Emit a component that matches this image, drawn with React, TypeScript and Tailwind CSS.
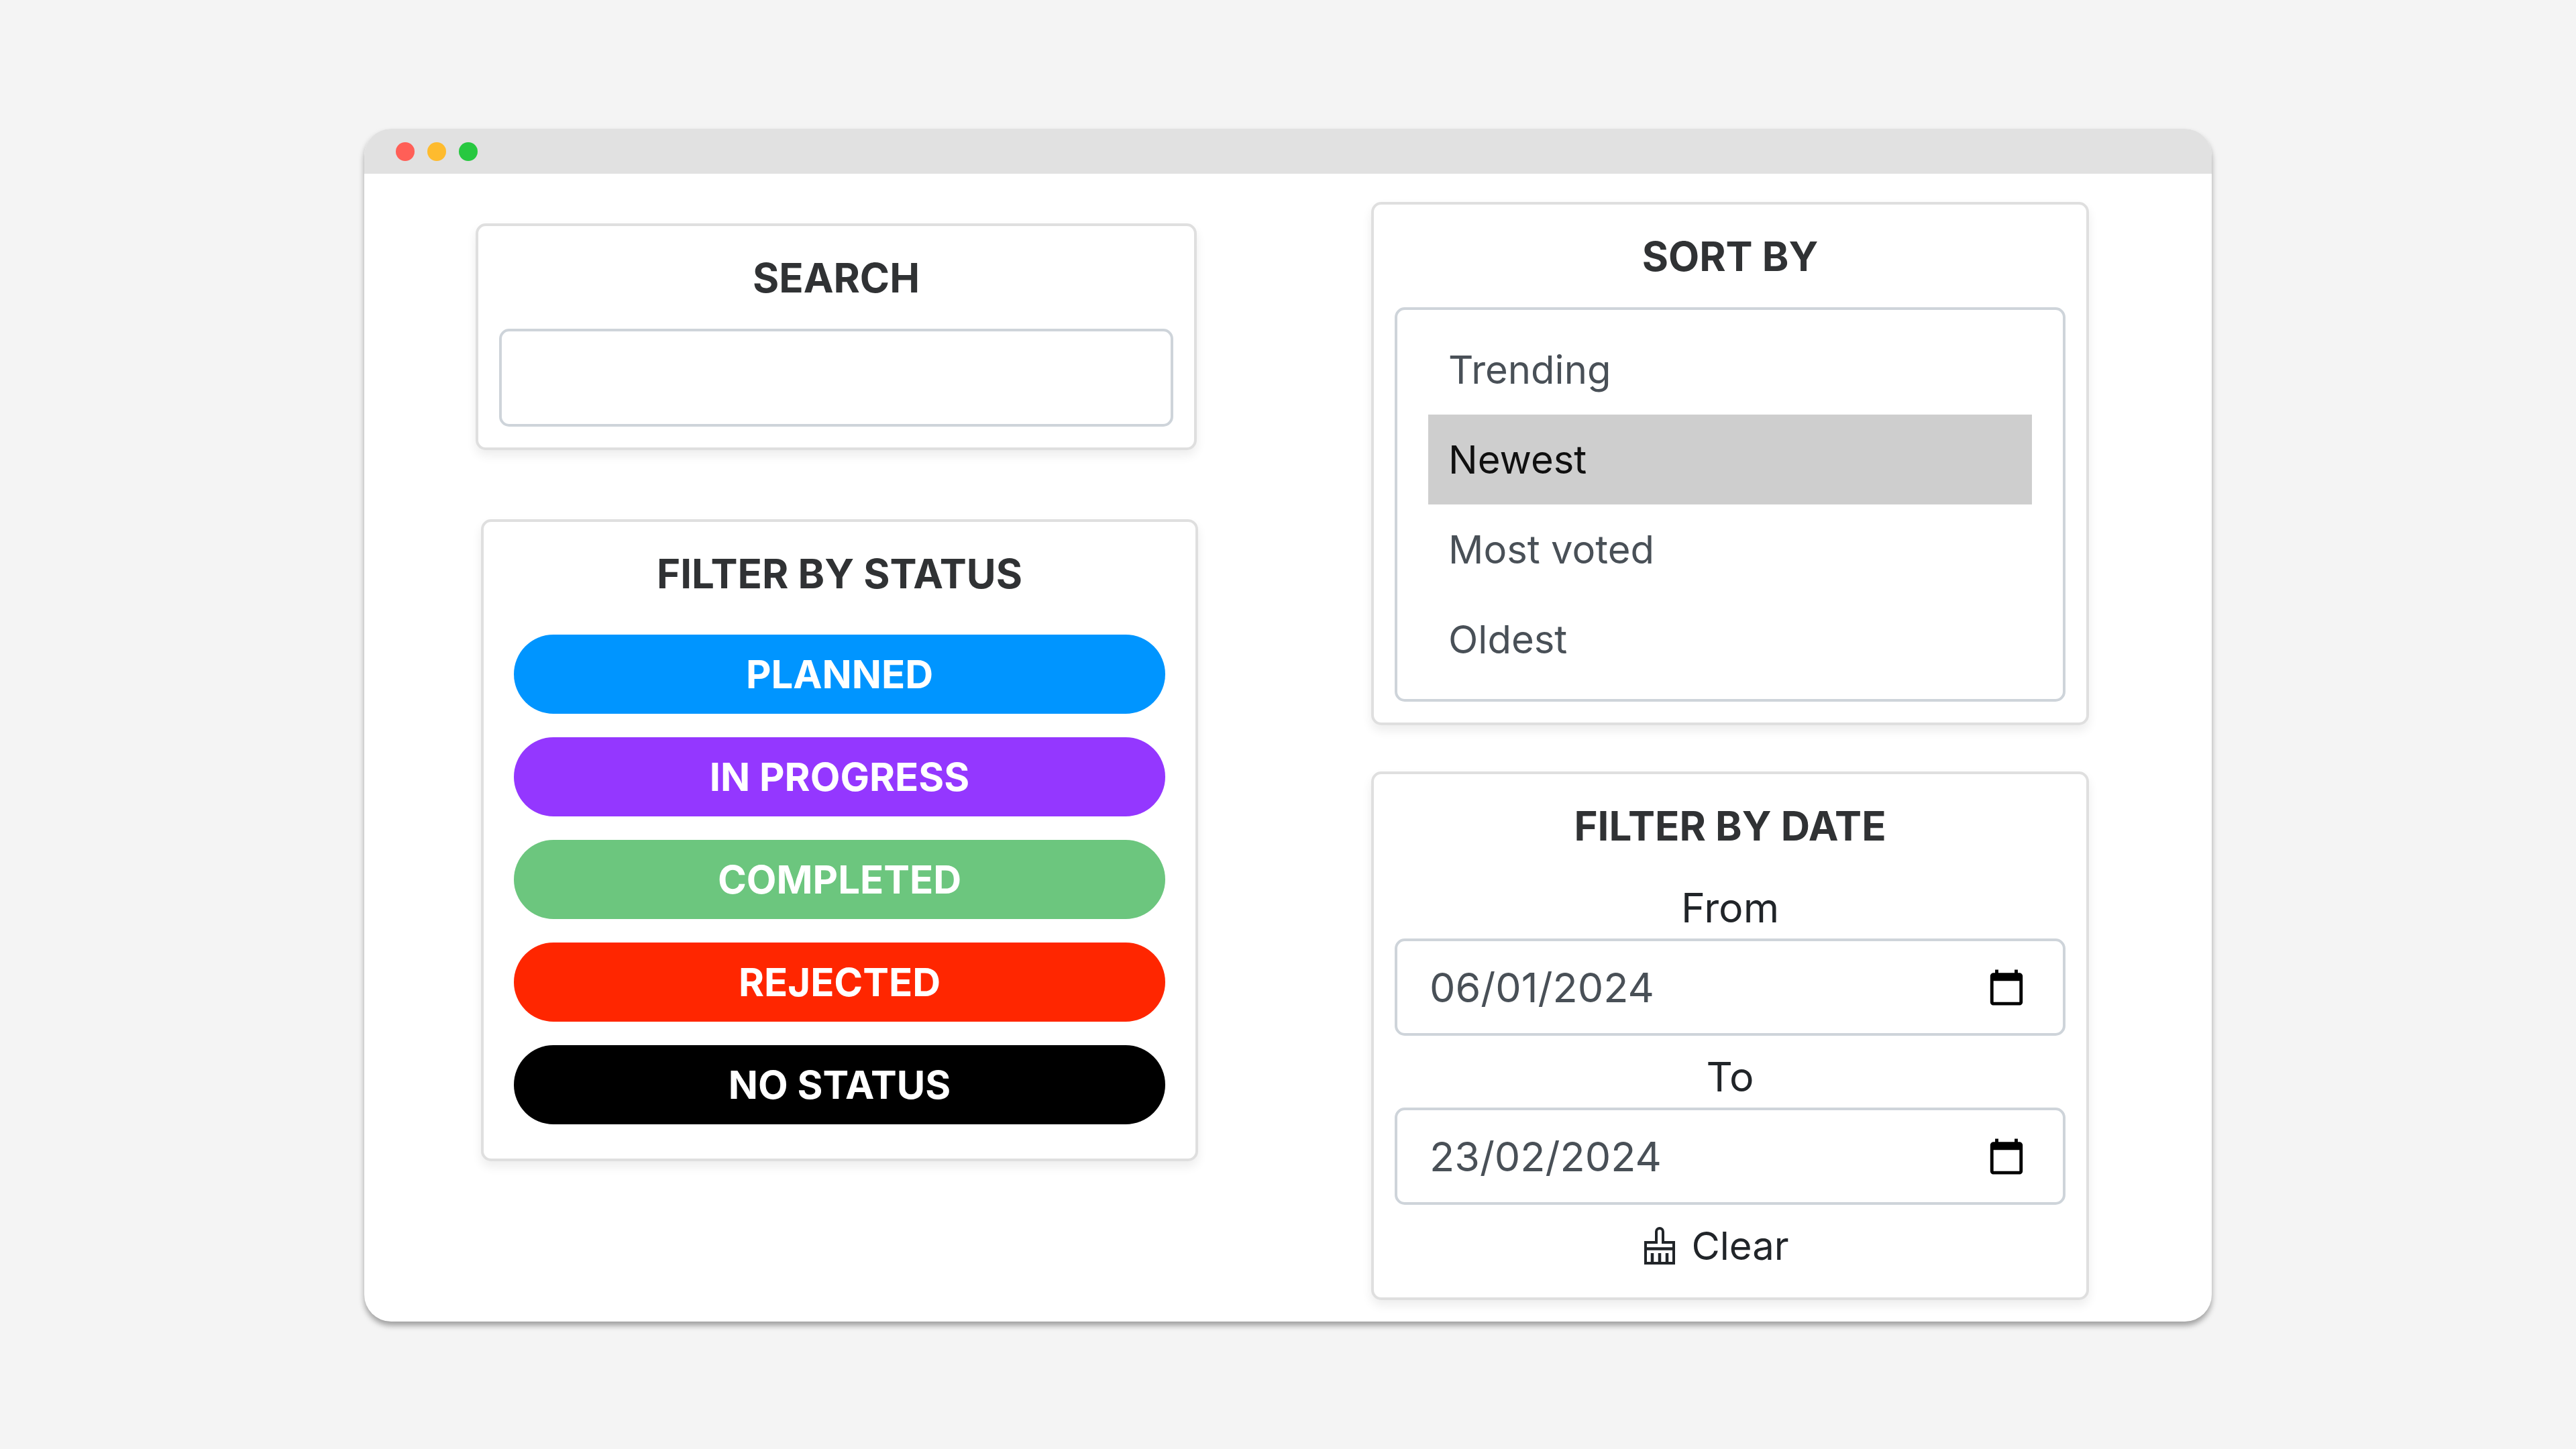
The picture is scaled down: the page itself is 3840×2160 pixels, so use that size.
import { useState } from "react";
import type { ReactNode } from "react";

const statuses = [
  { name: "PLANNED", color: "bg-[#0095ff]" },
  { name: "IN PROGRESS", color: "bg-[#9437ff]" },
  { name: "COMPLETED", color: "bg-[#6cc67e]" },
  { name: "REJECTED", color: "bg-[#ff2600]" },
  { name: "NO STATUS", color: "bg-black" },
];

const sortOptions = ["Trending", "Newest", "Most voted", "Oldest"];

function Card({ title, titleId, className = "", children }: { title: string; titleId: string; className?: string; children: ReactNode }) {
  return (
    <section
      aria-labelledby={titleId}
      className={`rounded-[15px] border-4 border-[#dfdfdf] bg-white p-[31px] shadow-[0_8px_15px_rgba(0,0,0,0.075)] ${className}`}
    >
      <h2 id={titleId} className="mb-[30px] text-center text-[60px] leading-[92px] font-bold text-[#303234]">
        {title}
      </h2>
      {children}
    </section>
  );
}

function CalendarIcon() {
  return (
    <svg viewBox="0 0 24 24" className="size-[58px]" fill="#000" aria-hidden="true">
      <path d="M20 3h-1V1h-2v2H7V1H5v2H4c-1.1 0-2 .9-2 2v16c0 1.1.9 2 2 2h16c1.1 0 2-.9 2-2V5c0-1.1-.9-2-2-2zm0 18H4V8h16v13z" />
    </svg>
  );
}

function BrushIcon() {
  return (
    <svg viewBox="0 0 46 56" className="h-14 w-[46px]" fill="none" stroke="currentColor" strokeWidth="4" aria-hidden="true">
      <path d="M2 54V23h16V7a5 5 0 0 1 10 0v16h16v31z" />
      <path d="M2 32.500h42M12 39v15M23 39v15M34 39v15" strokeWidth="4.500" />
    </svg>
  );
}

function DateField({ id, label, value, onChange }: { id: string; label: string; value: string; onChange: (v: string) => void }) {
  return (
    <div className="mb-[15px]">
      <label htmlFor={id} className="block text-center leading-[92px]">
        {label}
      </label>
      <div className="flex h-[145px] items-center rounded-[15px] border-4 border-[#ced4da] pr-[55px] pl-12 text-[#495057]">
        <input
          id={id}
          type="text"
          value={value}
          onChange={(e) => onChange(e.target.value)}
          className="h-[92px] min-w-0 flex-1 outline-none"
        />
        <button type="button" aria-label={`Pick ${label} date`}>
          <CalendarIcon />
        </button>
      </div>
    </div>
  );
}

export default function App() {
  const [query, setQuery] = useState("");
  const [sort, setSort] = useState("Newest");
  const [from, setFrom] = useState("06/01/2024");
  const [to, setTo] = useState("23/02/2024");

  return (
    <div className="min-h-screen bg-[#f4f4f4] px-[543px] py-48 font-['Inter',sans-serif] text-[61px] text-[#212529]">
      <main className="overflow-clip rounded-[40px] bg-white shadow-[0_6px_8px_rgba(0,0,0,0.35)]">
        <div className="flex h-[67px] items-center gap-[19px] bg-[#e1e1e1] pl-[47px]">
          <span className="size-7 rounded-full bg-[#ff5f57]" />
          <span className="size-7 rounded-full bg-[#febb2e]" />
          <span className="size-7 rounded-full bg-[#27c840]" />
        </div>
        <div className="grid grid-cols-[minmax(0,1077fr)_minmax(0,1070fr)] items-start gap-[258px] pt-[42px] pr-[183px] pb-8 pl-[166px]">
          <div className="flex flex-col gap-[103px] pt-8">
            <Card title="SEARCH" titleId="search-title" className="mr-0.5">
              <input
                type="search"
                aria-labelledby="search-title"
                value={query}
                onChange={(e) => setQuery(e.target.value)}
                className="block h-[146px] w-full rounded-[15px] border-4 border-[#ced4da] px-[46px] text-[#495057] outline-none"
              />
            </Card>
            <Card title="FILTER BY STATUS" titleId="status-title" className="ml-2">
              <div className="flex flex-col gap-[35px] px-[14px] pt-[15px] pb-5">
                {statuses.map((s) => (
                  <button key={s.name} type="button" className={`h-[118px] rounded-full text-[58px] font-bold text-white ${s.color}`}>
                    {s.name}
                  </button>
                ))}
              </div>
            </Card>
          </div>
          <div className="flex flex-col gap-[69px]">
            <Card title="SORT BY" titleId="sort-title">
              <select
                size={4}
                aria-labelledby="sort-title"
                value={sort}
                onChange={(e) => setSort(e.target.value)}
                className="block w-full overflow-hidden rounded-[15px] border-4 border-[#ced4da] px-[46px] py-[22px] text-[58px] text-[#495057] outline-none"
              >
                {sortOptions.map((o) => (
                  <option key={o} value={o} className="px-[30px] py-8">
                    {o}
                  </option>
                ))}
              </select>
            </Card>
            <Card title="FILTER BY DATE" titleId="date-title">
              <DateField id="date-from" label="From" value={from} onChange={setFrom} />
              <DateField id="date-to" label="To" value={to} onChange={setTo} />
              <button
                type="button"
                onClick={() => {
                  setFrom("");
                  setTo("");
                }}
                className="mx-auto flex items-center gap-6 pr-10 text-[58px] leading-[92px]"
              >
                <BrushIcon />
                Clear
              </button>
            </Card>
          </div>
        </div>
      </main>
    </div>
  );
}
